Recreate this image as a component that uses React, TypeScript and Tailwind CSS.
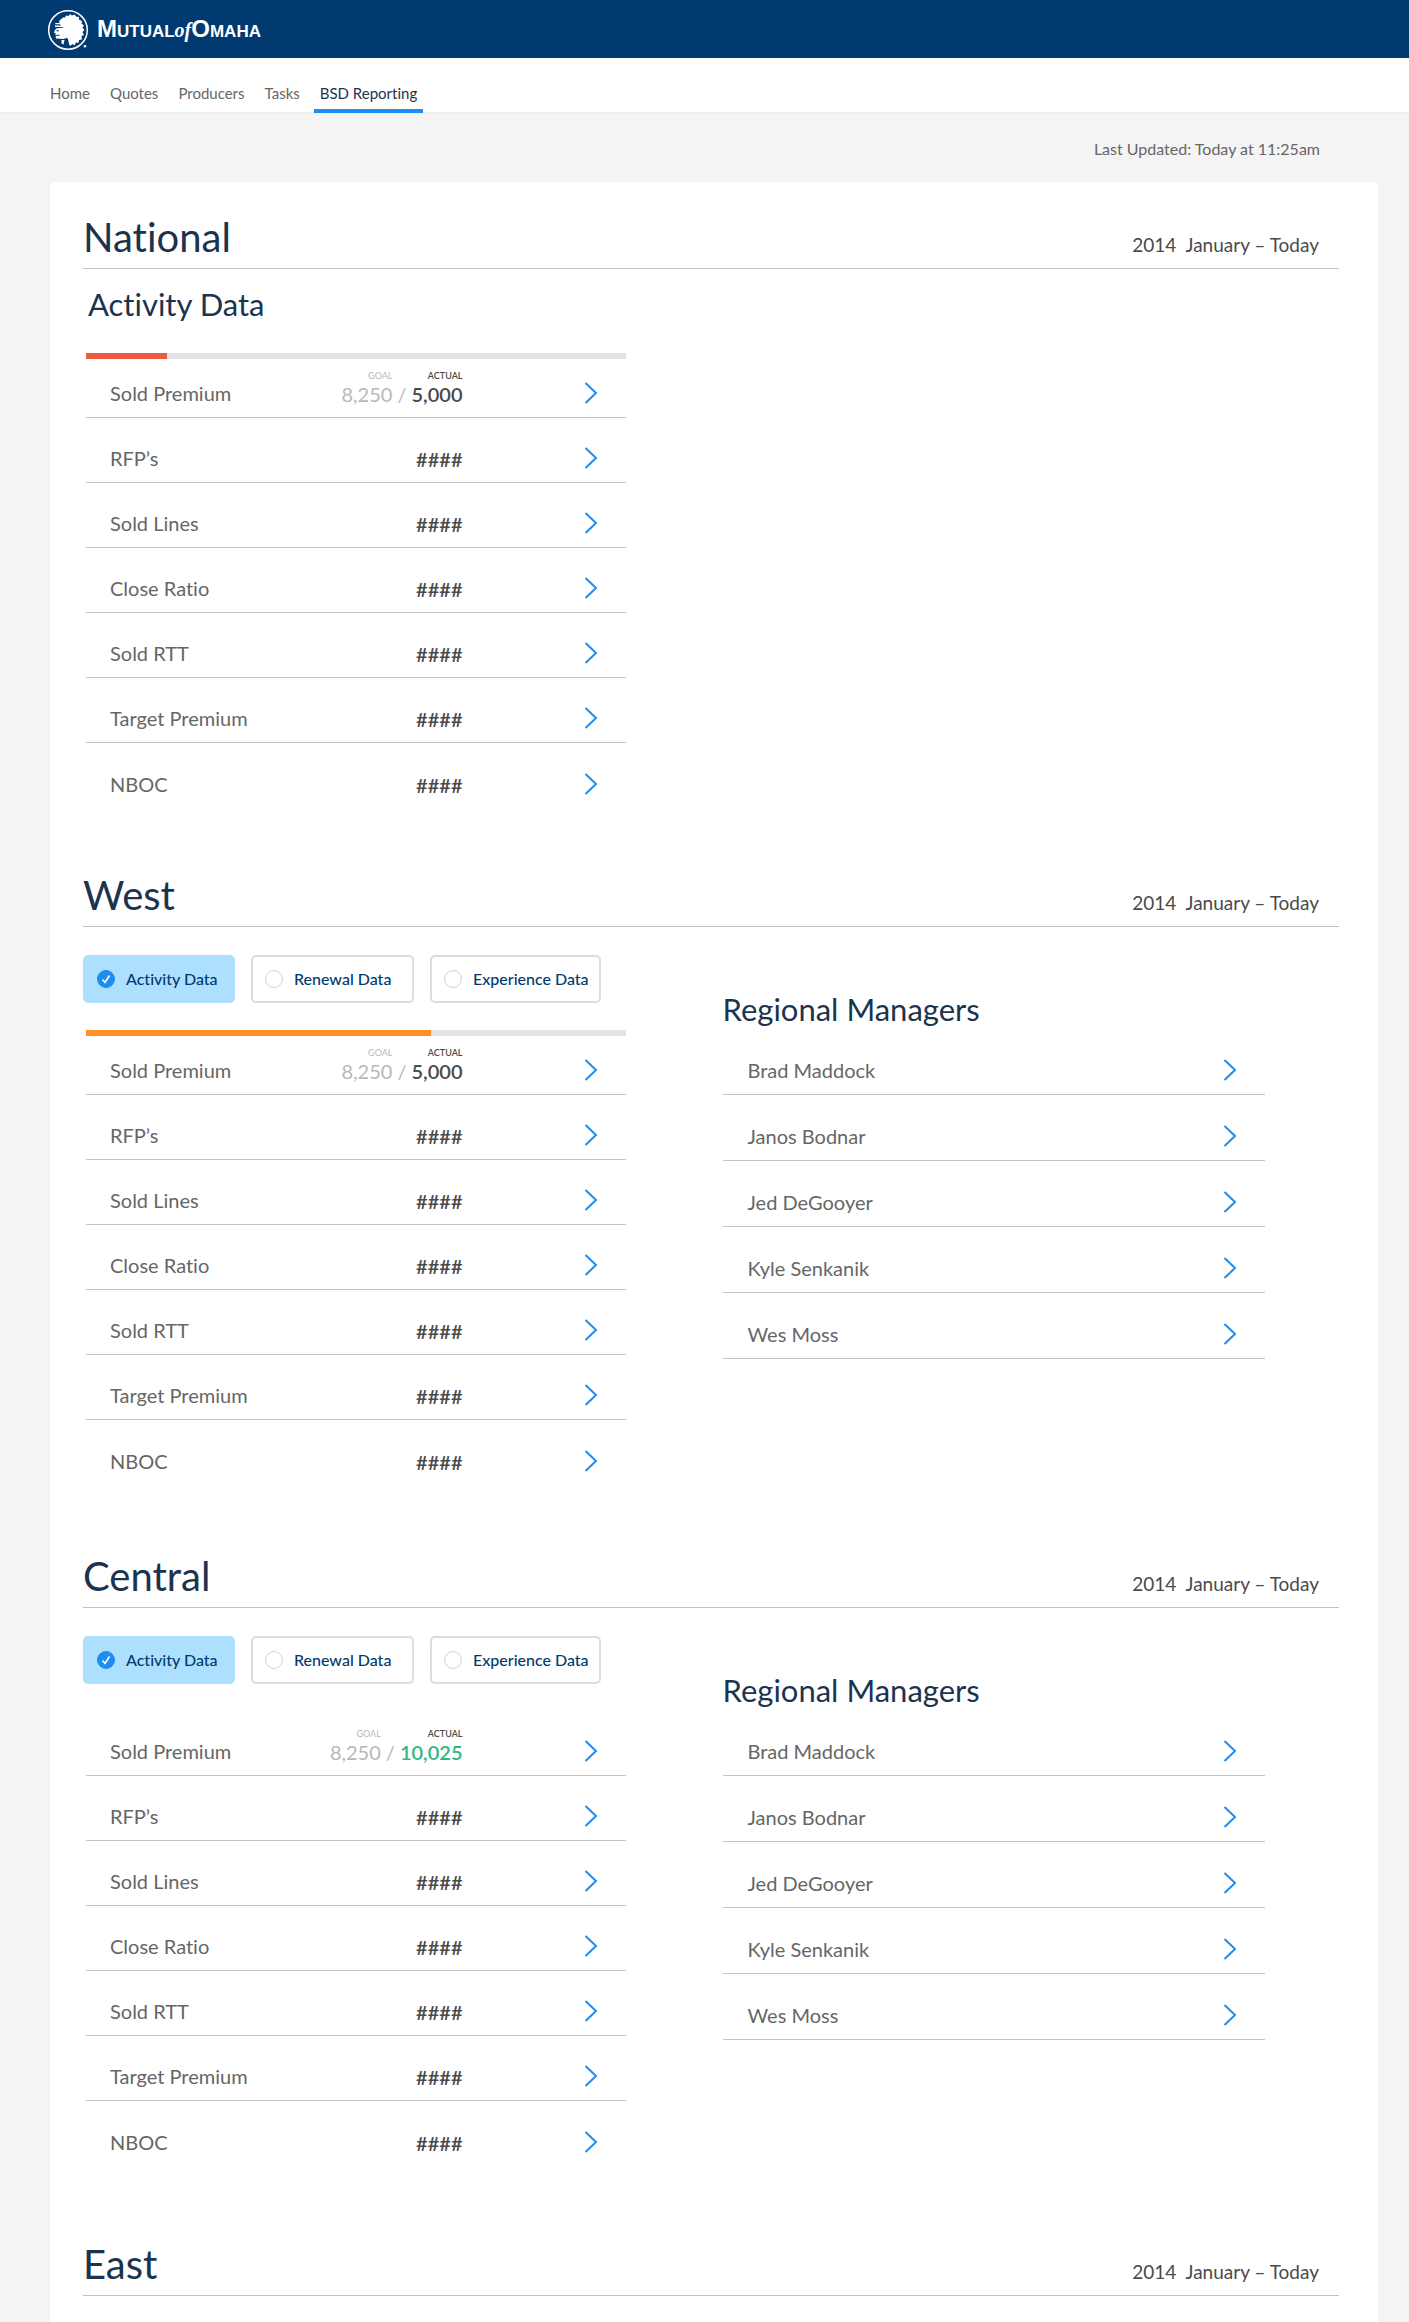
import React from "react";

type Metric = { label: string; value?: string; goal?: string; actual?: string; actualClass?: string };

const otherMetrics = ["RFP’s", "Sold Lines", "Close Ratio", "Sold RTT", "Target Premium", "NBOC"];
const managers = ["Brad Maddock", "Janos Bodnar", "Jed DeGooyer", "Kyle Senkanik", "Wes Moss"];
const navItems = ["Home", "Quotes", "Producers", "Tasks", "BSD Reporting"];
const dataOptions = ["Activity Data", "Renewal Data", "Experience Data"];

function metricsFor(actual: string, actualClass: string): Metric[] {
  return [
    { label: "Sold Premium", goal: "8,250", actual, actualClass },
    ...otherMetrics.map((label) => ({ label, value: "####" })),
  ];
}

function Logo() {
  return (
    <a href="#" aria-label="Mutual of Omaha" className="flex items-center gap-2 text-white">
      <svg width="42" height="42" viewBox="0 0 42 42" aria-hidden="true">
        <circle cx="21" cy="21" r="19.3" fill="none" stroke="currentColor" strokeWidth="1.5" />
        {/* feathered headdress */}
        <path
          fill="currentColor"
          d="M12 12 L16 8.500 L18 8.500 L19 6.500 L21.500 7 L23 5 L25 6.500 L27.500 5.500 L29 7.500 L32 8 L32 10.500 L35 12 L34.500 14.500 L37 16.500 L35.500 18.500 L37.500 21 L35.500 23 L37 26 L34.500 27 L35 30.500 L32 31 L31.500 34 L29 33.500 L27.500 36.500 L25.500 35 L23 37 L22 35 L21 30 L18.500 27 L17 23 L17 19 L14 17 Z"
        />
        {/* face and headband */}
        <path fill="currentColor" d="M8.500 14 L14 14 L14 15.300 L8 15.300 Z M8 16.500 L15 16.500 L15 18 L8 18 Z" />
        <path
          fill="currentColor"
          d="M9 19.500 L17 18.500 L18 24 L20 29 L16 30 L9 29.500 L8.500 27.500 L10 26.500 L8 25.500 L9 24.500 L6.800 23.500 Z"
        />
        <path d="M9.500 21.800h2.500M9.500 26.300h3" stroke="#003a70" strokeWidth="1" />
        <path fill="currentColor" d="M14.500 31 L17.500 31 L16.500 35.500 L14.500 34.500 Z" />
        <circle cx="38" cy="37.200" r="1.300" fill="currentColor" />
      </svg>
      <span className="flex items-baseline font-['Liberation_Sans',sans-serif] text-[17px] leading-8 font-bold">
        <span className="text-2xl leading-8">M</span>
        <span className="uppercase">utual</span>
        <span className="font-['Liberation_Serif',serif] text-xl leading-8 italic">of</span>
        <span className="text-2xl leading-8">O</span>
        <span className="uppercase">maha</span>
      </span>
    </a>
  );
}

function ChevronButton({ label }: { label: string }) {
  return (
    <button type="button" aria-label={label} className="block text-[#1f8cf0]">
      <svg width="14" height="22" viewBox="0 0 14 22" fill="none" stroke="currentColor" strokeWidth="2" aria-hidden="true">
        <path d="M1.500 1 L12 11 L1.500 21" />
      </svg>
    </button>
  );
}

function SectionHeader({ title }: { title: string }) {
  return (
    <header className="flex items-baseline justify-between border-b border-[#c0c0c0] pb-[7px]">
      <h2 className="text-[40px] leading-[48px] text-[#1a344f]">{title}</h2>
      <p className="mr-5 text-[19px] leading-7 whitespace-pre text-[#4a4a4a]">2014  January – Today</p>
    </header>
  );
}

function Progress({ percent, color }: { percent: number; color: string }) {
  return (
    <div
      role="progressbar"
      aria-label="Sold Premium progress"
      aria-valuenow={percent}
      className="h-full bg-[#e4e4e4]"
    >
      <div className={"h-full " + color} style={{ width: percent + "%" }} />
    </div>
  );
}

function MetricsTable({ metrics }: { metrics: Metric[] }) {
  return (
    <table className="w-full border-separate border-spacing-0 text-xl leading-[26px]">
      <tbody className="[&>tr:last-child>*]:border-b-0">
        {metrics.map((m) => (
          <tr
            key={m.label}
            className="h-[65px] first:h-[59px] [&>*]:border-b [&>*]:border-[#c4c4c4] [&>*]:p-0 [&>*]:align-bottom"
          >
            <th scope="row" className="text-left font-normal text-[#666666]">
              <div className="pb-[11px] pl-6">{m.label}</div>
            </th>
            <td className="text-right">
              {m.goal ? (
                <div className="flex items-end justify-end gap-[5px] pb-[10px]">
                  <div className="text-[#b8b8b8]">
                    <div className="text-[9px] leading-[10px]">GOAL</div>
                    {m.goal}
                  </div>
                  <span className="text-[#b8b8b8]">/</span>
                  <div className={m.actualClass}>
                    <div className="text-[9px] leading-[10px] font-semibold text-[#4a4a4a]">ACTUAL</div>
                    <span className="font-semibold">{m.actual}</span>
                  </div>
                </div>
              ) : (
                <div className="pb-[10px] font-semibold text-[#4a4a4a]">{m.value}</div>
              )}
            </td>
            <td className="w-[163px]">
              <div className="flex justify-end pr-7 pb-[13px]">
                <ChevronButton label={"Open " + m.label} />
              </div>
            </td>
          </tr>
        ))}
      </tbody>
    </table>
  );
}

function DataOptions({ name }: { name: string }) {
  return (
    <div role="radiogroup" aria-label={name + " data set"} className="grid grid-cols-[152px_163px_171px] gap-4">
      {dataOptions.map((option, i) => (
        <label
          key={option}
          className="flex h-12 items-center gap-[11px] rounded-[5px] border-2 border-[#dcdcdc] px-3 text-base font-medium whitespace-nowrap text-[#003a70] has-checked:border-[#ade0ff] has-checked:bg-[#ade0ff]"
        >
          <span className="grid place-items-center">
            <input
              type="radio"
              name={name}
              defaultChecked={i === 0}
              className="peer col-start-1 row-start-1 size-[18px] appearance-none rounded-full border border-[#d4d4d4] bg-white checked:border-[#1f8cf0] checked:bg-[#1f8cf0]"
            />
            <svg
              width="10"
              height="10"
              viewBox="0 0 10 10"
              fill="none"
              stroke="currentColor"
              strokeWidth="1.6"
              aria-hidden="true"
              className="pointer-events-none z-10 col-start-1 row-start-1 text-transparent peer-checked:text-white"
            >
              <path d="M1.500 5.500 L4 8.500 L8.500 1.500" />
            </svg>
          </span>
          {option}
        </label>
      ))}
    </div>
  );
}

function Managers() {
  return (
    <div>
      <h3 className="mt-16 text-[31px] leading-9 text-[#1a344f]">Regional Managers</h3>
      <ul className="mt-[2px] text-xl leading-[26px] text-[#666666]">
        {managers.map((name) => (
          <li key={name} className="flex h-[66px] items-end justify-between border-b border-[#c4c4c4] pr-7 pl-[25px]">
            <span className="pb-[11px]">{name}</span>
            <span className="pb-[13px]">
              <ChevronButton label={"Open " + name} />
            </span>
          </li>
        ))}
      </ul>
    </div>
  );
}

type RegionProps = { title: string; metrics: Metric[]; progress?: React.ReactNode; className: string };

function Region({ title, metrics, progress, className }: RegionProps) {
  return (
    <section className={className}>
      <SectionHeader title={title} />
      <div className="grid grid-cols-2 gap-x-[97px] pr-[74px]">
        <div className="pt-7">
          <DataOptions name={title} />
          <div className="mt-[27px] pl-[3px]">
            <div className="h-[6px]">{progress}</div>
            <MetricsTable metrics={metrics} />
          </div>
        </div>
        <Managers />
      </div>
    </section>
  );
}

export default function App() {
  return (
    <div className="flex min-h-screen flex-col bg-[#f4f4f4] font-['Lato',sans-serif] [font-variant-ligatures:none]">
      <div className="flex h-[58px] items-center bg-[#003a70] pt-[2px] pl-[47px]">
        <Logo />
      </div>
      <nav className="flex h-14 items-end gap-2 border-b-2 border-[#eeeeee] bg-white pl-11 text-[15px] leading-5 text-[#666666]">
        {navItems.map((item) => (
          <a
            key={item}
            href="#"
            aria-current={item === "BSD Reporting" ? "page" : undefined}
            className="-mb-px border-b-4 border-transparent px-[6px] pb-[6px] aria-[current=page]:border-[#1f8cf0] aria-[current=page]:text-[#1a344f]"
          >
            {item}
          </a>
        ))}
      </nav>
      <p className="pt-[25px] pr-[89px] pb-[23px] text-right text-base leading-5 text-[#666666]">
        Last Updated: Today at 11:25am
      </p>
      <main className="mr-[31px] ml-[50px] grow rounded-t-[4px] bg-white pt-[31px] pr-[39px] pb-6 pl-[33px]">
        <section className="mb-[63px]">
          <SectionHeader title="National" />
          <div className="grid grid-cols-2 gap-x-[97px] pr-[74px]">
            <div className="pt-[17px] pl-[3px]">
              <h3 className="pl-[2px] text-[31px] leading-9 text-[#1a344f]">Activity Data</h3>
              <div className="mt-[31px] h-[6px]">
                <Progress percent={15} color="bg-[#ec5b40]" />
              </div>
              <MetricsTable metrics={metricsFor("5,000", "text-[#4a4a4a]")} />
            </div>
          </div>
        </section>
        <Region
          title="West"
          metrics={metricsFor("5,000", "text-[#4a4a4a]")}
          progress={<Progress percent={64} color="bg-[#ff8f26]" />}
          className="mb-[67px]"
        />
        <Region title="Central" metrics={metricsFor("10,025", "text-[#2fb880]")} className="mb-[74px]" />
        <section>
          <SectionHeader title="East" />
        </section>
      </main>
    </div>
  );
}
